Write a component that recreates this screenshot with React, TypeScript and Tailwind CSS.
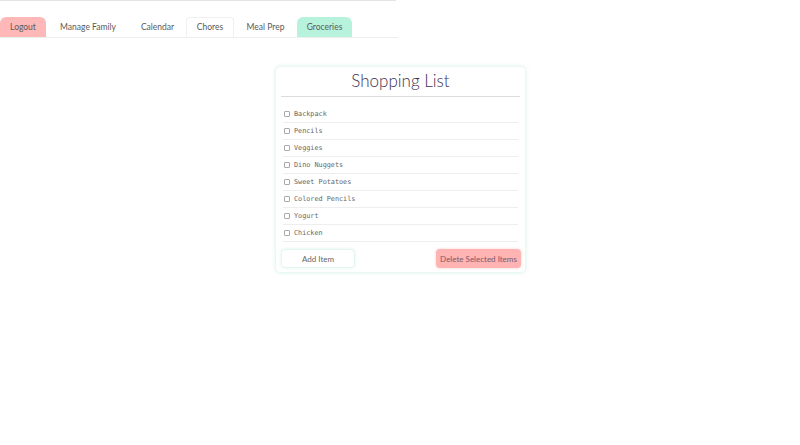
import React from "react";

const tabs = [
  { label: "Logout", cls: "w-[46px] mr-px bg-[#ffb8b8] rounded-t-[6px]" },
  { label: "Manage Family", cls: "w-[82px]" },
  { label: "Calendar", cls: "w-[57px]" },
  { label: "Chores", cls: "w-[48px] border border-b-0 border-[#f0f0f0] rounded-t-[4px]" },
  { label: "Meal Prep", cls: "w-[63px]" },
  { label: "Groceries", cls: "w-[55px] bg-[#b7f2dc] rounded-t-[6px]" },
];

const items = [
  "Backpack",
  "Pencils",
  "Veggies",
  "Dino Nuggets",
  "Sweet Potatoes",
  "Colored Pencils",
  "Yogurt",
  "Chicken",
];

export default function App() {
  return (
    <div className="w-[800px] h-[445px] bg-white text-[#555] font-['Lato',sans-serif] overflow-hidden">
      <div className="w-[396px] h-px bg-[#e4e4e4]" />
      <div className="w-[398px] mt-[16px] flex border-b border-[#eeeeee] h-[21px]">
        {tabs.map((t) => (
          <div
            key={t.label}
            className={`${t.cls} h-[20px] flex items-center justify-center text-[8.5px] text-[#5a5a5a]`}
          >
            {t.label}
          </div>
        ))}
      </div>
      <div className="flex justify-center mt-[28px]">
        <div className="w-[251px] rounded-[5px] border border-[#eaf7f2] shadow-[0_0_4px_rgba(160,230,200,0.35)] px-[5px] pt-[3px] pb-[4px] ml-[1px]">
          <div className="text-center text-[17px] font-light text-[#3e3050] leading-[22px] pb-[4px] border-b border-[#dcdcdc]">
            Shopping List
          </div>
          <div className="mt-[9px] px-[2px]">
            {items.map((it) => (
              <div
                key={it}
                className="h-[17px] flex items-center gap-[3px] border-b border-[#eeeeee] font-['DejaVu_Sans_Mono',monospace] text-[6.8px] text-[#666]"
              >
                <span className="w-[6px] h-[6px] border border-[#aaa] rounded-[1px] ml-[1px] mr-[1px]" />
                <span>{it}</span>
              </div>
            ))}
          </div>
          <div className="flex justify-between mt-[7px]">
            <div className="w-[74px] h-[19px] rounded-[4px] border border-[#e2f5ee] shadow-[0_0_3px_rgba(160,230,200,0.4)] flex items-center justify-center text-[8px] text-[#666]">
              Add Item
            </div>
            <div className="w-[85px] h-[19px] rounded-[4px] bg-[#ffb3b3] shadow-[0_0_3px_rgba(255,160,160,0.5)] flex items-center justify-center text-[8px] text-[#7a5a6a] mr-[-1px]">
              Delete Selected Items
            </div>
          </div>
        </div>
      </div>
    </div>
  );
}
